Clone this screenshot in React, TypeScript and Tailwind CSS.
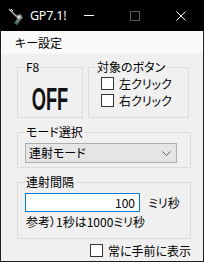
import React from 'react'

function Check({ label }: { label: string }) {
  return (
    <label className="flex items-center h-[13px] gap-[5px]">
      <span className="w-[13px] h-[13px] border border-[#333333] bg-white shrink-0"></span>
      <span className="text-[12px] leading-[14px] text-black whitespace-nowrap">{label}</span>
    </label>
  )
}

function Group({
  title,
  className,
  children,
}: {
  title: string
  className: string
  children: React.ReactNode
}) {
  return (
    <fieldset className={`border border-[#dcdcdc] ${className}`}>
      <legend className="ml-[7px] px-[1px] text-[12px] leading-[14px] text-black">{title}</legend>
      {children}
    </fieldset>
  )
}

export default function App() {
  return (
    <div className="w-[204px] h-[262px] bg-[#1f1f1f] flex flex-col font-['Noto_Sans_CJK_JP',sans-serif] [font-feature-settings:'palt'] select-none">
      {/* Title bar */}
      <div className="h-[31px] bg-black flex items-center shrink-0">
        <svg width="16" height="18" viewBox="0 0 16 18" className="ml-[8px]">
          <line x1="1" y1="2" x2="9" y2="10" stroke="#b8b8b8" strokeWidth="1.4" />
          <line x1="3" y1="2" x2="5" y2="4" stroke="#e0e0e0" strokeWidth="1" />
          <path d="M8 8 L13 7 L15 11 L12 14 L10 17 L7 15 L9 12 Z" fill="#6d7a72" />
          <path d="M9 9 L12 8.5 L13 11 L10 12 Z" fill="#d8dcda" />
          <path d="M7 15 L10 17 L9 18 L6 16 Z" fill="#2f8a5a" />
        </svg>
        <span className="ml-[6px] text-[12.5px] leading-[14px] text-white font-['Noto_Sans',sans-serif] tracking-[-0.2px]">
          GP7.1!
        </span>
        <div className="flex-1"></div>
        <div className="w-[46px] h-[31px] flex items-center justify-center">
          <span className="w-[10px] h-[1px] bg-white"></span>
        </div>
        <div className="w-[46px] h-[31px] flex items-center justify-center">
          <span className="w-[10px] h-[10px] border border-[#5a5a5a]"></span>
        </div>
        <div className="w-[46px] h-[31px] flex items-center justify-center">
          <svg width="10" height="10" viewBox="0 0 10 10">
            <path d="M0.5 0.5 L9.5 9.5 M9.5 0.5 L0.5 9.5" stroke="white" strokeWidth="1" />
          </svg>
        </div>
      </div>

      {/* Client area */}
      <div className="flex-1 mx-[1px] mb-[1px] bg-[#f0f0f0] flex flex-col">
        {/* Menu bar */}
        <div className="h-[23px] bg-[#f9f9f9] flex items-center pl-[14px] shrink-0">
          <span className="text-[12px] leading-[14px] text-black">キー設定</span>
        </div>

        <div className="pl-[16px] pt-[6px] flex flex-col">
          <div className="flex gap-[5px]">
            <Group title="F8" className="w-[60px] h-[58px]">
              <div className="flex justify-center pt-[9px]">
                <span className="inline-block text-[32px] leading-[32px] font-bold font-['Liberation_Sans',sans-serif] text-[#111] scale-x-[0.57]">
                  OFF
                </span>
              </div>
            </Group>
            <Group title="対象のボタン" className="w-[101px] h-[58px]">
              <div className="flex flex-col gap-[4px] pl-[12px] pt-[3px]">
                <Check label="左クリック" />
                <Check label="右クリック" />
              </div>
            </Group>
          </div>

          <Group title="モード選択" className="w-[174px] h-[43px] mt-[7px]">
            <div className="pl-[7px] pt-[4px]">
              <div className="w-[152px] h-[20px] border border-[#adadad] bg-[#e5e5e5] flex items-center pl-[3px] pr-[5px]">
                <span className="text-[12px] leading-[14px] text-black flex-1">連射モード</span>
                <svg width="9" height="5" viewBox="0 0 9 5">
                  <path d="M0.5 0.5 L4.5 4.5 L8.5 0.5" stroke="#606060" strokeWidth="1" fill="none" />
                </svg>
              </div>
            </div>
          </Group>

          <Group title="連射間隔" className="w-[174px] h-[64px] mt-[7px]">
            <div className="pl-[7px] pt-[4px] flex flex-col">
              <div className="flex items-center">
                <div className="w-[115px] h-[19px] border border-[#0078d7] bg-white flex items-center justify-end pr-[4px]">
                  <span className="text-[12px] leading-[14px] text-black">100</span>
                </div>
                <span className="ml-[8px] text-[12px] leading-[14px] text-black">ミリ秒</span>
              </div>
              <span className="mt-[3px] pl-[1px] text-[12px] leading-[14px] text-black whitespace-nowrap">
                参考）1秒は1000ミリ秒
              </span>
            </div>
          </Group>

          <div className="mt-[5px] pl-[73px]">
            <Check label="常に手前に表示" />
          </div>
        </div>
      </div>
    </div>
  )
}
